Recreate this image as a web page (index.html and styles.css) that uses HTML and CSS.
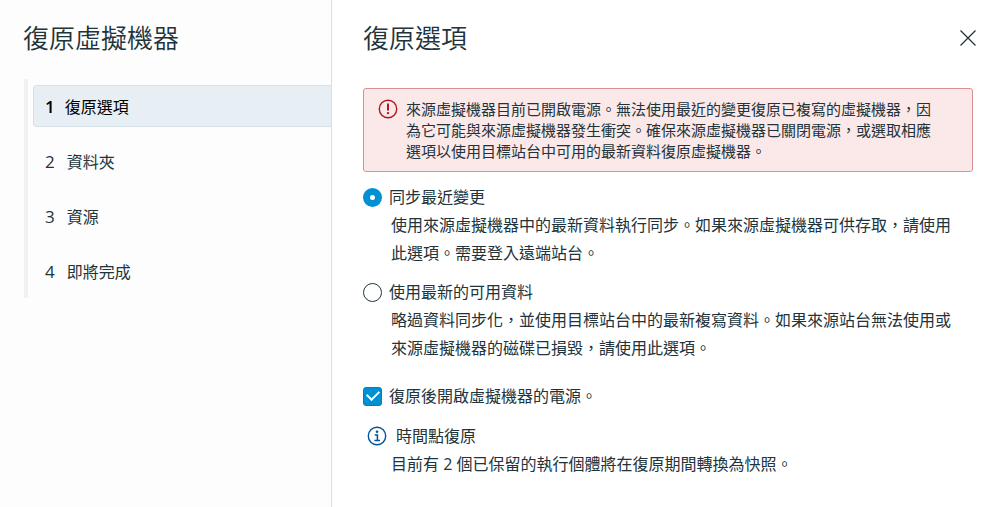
FILE: index.html
```html
<!DOCTYPE html>
<html lang="zh-Hant">
  <head>
    <meta charset="utf-8">
    <title>復原虛擬機器</title>
    <link rel="stylesheet" href="styles.css">
  </head>
  <body>
    <div class="wizard">
      <aside class="sidebar">
        <h1>復原虛擬機器</h1>
        <ol class="steps">
          <li><a class="step active" href="#options" aria-current="step"><span class="num">1</span><span>復原選項</span></a></li>
          <li><a class="step" href="#folder"><span class="num">2</span><span>資料夾</span></a></li>
          <li><a class="step" href="#resource"><span class="num">3</span><span>資源</span></a></li>
          <li><a class="step" href="#finish"><span class="num">4</span><span>即將完成</span></a></li>
        </ol>
      </aside>
      <main class="content" id="options">
        <header class="content-header">
          <h2>復原選項</h2>
          <button class="close" type="button" aria-label="關閉">
            <svg width="18" height="18" viewBox="0 0 18 18">
              <path d="M1.5 1.5l15 15M16.5 1.5l-15 15" fill="none" stroke="#21333b" stroke-width="1.3"/>
            </svg>
          </button>
        </header>

        <div class="alert" role="alert">
          <svg class="alert-icon" width="20" height="20" viewBox="0 0 20 20">
            <circle cx="10" cy="10" r="8.7" fill="none" stroke="#b3151b" stroke-width="1.4"/>
            <path d="M10 5.2v5.6" stroke="#b3151b" stroke-width="2" stroke-linecap="round"/>
            <circle cx="10" cy="14.1" r="1.2" fill="#b3151b"/>
          </svg>
          <p>來源虛擬機器目前已開啟電源。無法使用最近的變更復原已複寫的虛擬機器，因為它可能與來源虛擬機器發生衝突。確保來源虛擬機器已關閉電源，或選取相應選項以使用目標站台中可用的最新資料復原虛擬機器。</p>
        </div>

        <form>
          <div class="option">
            <label><input type="radio" name="sync" checked>同步最近變更</label>
            <p class="description">使用來源虛擬機器中的最新資料執行同步。如果來源虛擬機器可供存取，請使用此選項。需要登入遠端站台。</p>
          </div>
          <div class="option">
            <label><input type="radio" name="sync">使用最新的可用資料</label>
            <p class="description">略過資料同步化，並使用目標站台中的最新複寫資料。如果來源站台無法使用或來源虛擬機器的磁碟已損毀，請使用此選項。</p>
          </div>
          <div class="power">
            <label><input type="checkbox" checked>復原後開啟虛擬機器的電源。</label>
          </div>
        </form>

        <section class="info">
          <h3>
            <svg width="20" height="20" viewBox="0 0 20 20">
              <circle cx="10" cy="10" r="8.7" fill="none" stroke="#00539c" stroke-width="1.4"/>
              <circle cx="10" cy="5.8" r="1.3" fill="#00539c"/>
              <path d="M7.8 8.9h2.6v5.4M7.4 14.4h5.6" fill="none" stroke="#00539c" stroke-width="1.5"/>
            </svg>
            時間點復原
          </h3>
          <p class="description">目前有 2 個已保留的執行個體將在復原期間轉換為快照。</p>
        </section>
      </main>
    </div>
  </body>
</html>
```

FILE: styles.css
```css
* {
  box-sizing: border-box;
}

body {
  margin: 0;
  font-family: "Open Sans", "Noto Sans CJK TC", sans-serif;
  font-size: 16px;
  line-height: 28px;
  color: #21333b;
  background-color: #fff;
}

h1, h2, h3, p {
  margin: 0;
}

h1, h2 {
  font-size: 26px;
  font-weight: 350;
  line-height: 36px;
}

.wizard {
  display: flex;
  min-height: 100vh;
}

/* Left side with the step list */
.sidebar {
  flex: 0 0 332px;
  padding: 20px 0 20px 23px;
  background-color: #fdfdfd;
  border-right: 1px solid #ddd;
}

.steps {
  display: flex;
  flex-direction: column;
  gap: 13px;
  margin: 23px 0 0 1px;
  padding: 6px 0 6px 5px;
  list-style: none;
  border-left: 4px solid #f1f1f1;
}

.step {
  display: flex;
  align-items: center;
  gap: 12px;
  height: 42px;
  padding: 2px 0 0 12px;
  color: #21333b;
  text-decoration: none;
}

.step.active {
  color: #000;
  background-color: #e8eff4;
  border: 1px solid #d5e1e8;
  border-right: none;
  border-radius: 4px 0 0 4px;
  padding-left: 11px;
  gap: 10px;
}

.step.active .num {
  font-weight: 600;
}

.num {
  font-size: 17px;
}

/* Right side */
.content {
  flex: 1;
  min-width: 0;
  padding: 20px 27px 20px 31px;
}

.content-header {
  display: flex;
  align-items: center;
  justify-content: space-between;
}

.close {
  display: flex;
  margin-right: -4px;
  padding: 0;
  background: none;
  border: none;
  cursor: pointer;
}

.alert {
  display: flex;
  gap: 8px;
  margin: 32px 0 11px;
  padding: 10px 28px 9px 14px;
  font-size: 15px;
  line-height: 21px;
  background-color: #fbe8e8;
  border: 1px solid #d99090;
  border-radius: 3px;
}

.alert-icon {
  flex: none;
}

label {
  display: flex;
  align-items: center;
  gap: 7px;
}

.option {
  margin-bottom: 11px;
}

.description {
  padding: 0 9px 0 28px;
}

input {
  appearance: none;
  flex: none;
  width: 19px;
  height: 19px;
  margin: 0;
  border: 1px solid #21333b;
  background-color: #fff;
}

input[type="radio"] {
  border-radius: 50%;
}

input[type="radio"]:checked {
  border: 7px solid #0091d5;
}

input[type="checkbox"] {
  display: grid;
  place-items: center;
  border-color: #0080bd;
  border-radius: 3px;
}

input[type="checkbox"]:checked {
  background-color: #0091d5;
}

input[type="checkbox"]:checked::after {
  content: "";
  width: 10px;
  height: 6px;
  border: solid #fff;
  border-width: 0 0 2px 2px;
  transform: translateY(-2px) rotate(-45deg);
}

.power {
  margin-top: 20px;
}

.info {
  margin-top: 12px;
}

.info h3 {
  display: flex;
  align-items: center;
  gap: 9px;
  padding-left: 4px;
  font-size: 16px;
  font-weight: 400;
}
```
